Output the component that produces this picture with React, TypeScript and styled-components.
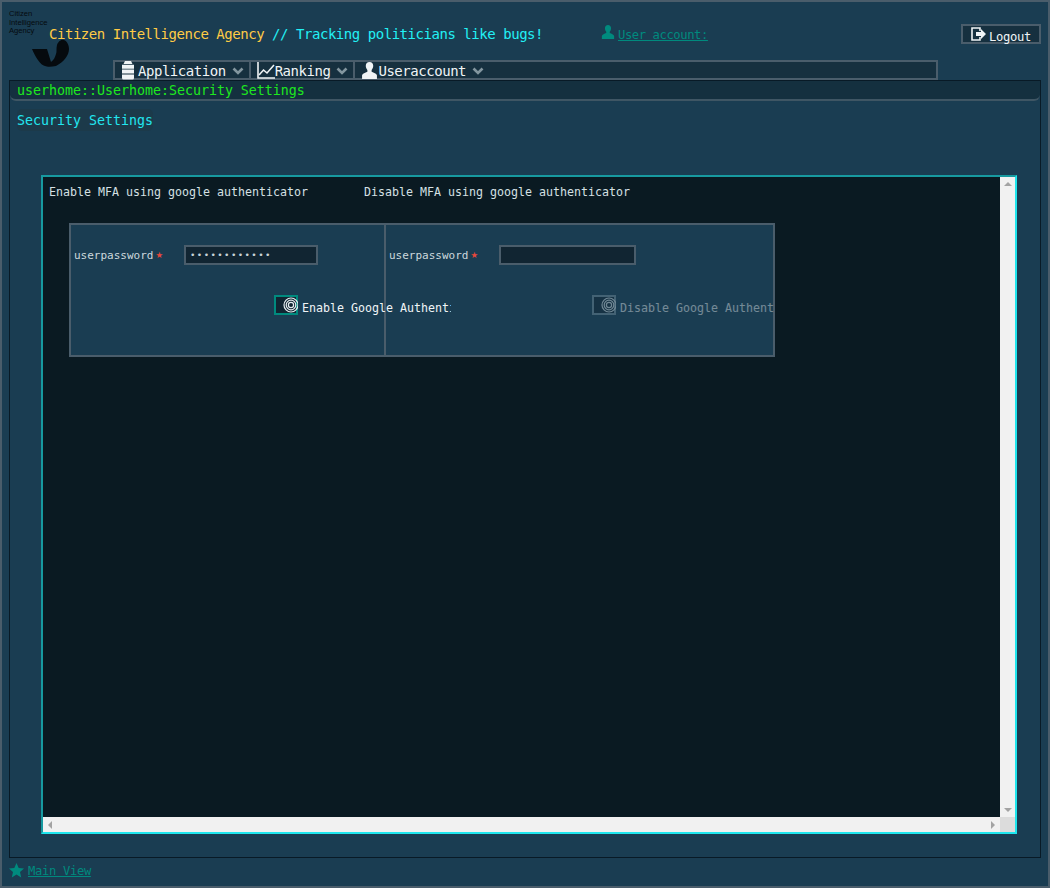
import * as React from 'react';
import styled, { createGlobalStyle } from 'styled-components';

const mono = '"DejaVu Sans Mono", "Liberation Mono", monospace';

const GlobalStyle = createGlobalStyle`
    html, body {
        margin: 0;
        padding: 0;
        background: #1a3d52;
    }
`;

const Page = styled.div`
    box-sizing: border-box;
    width: 1050px;
    height: 888px;
    display: flex;
    flex-direction: column;
    padding: 0 7px 0 7px;
    border: 2px solid #4a5d6b;
    background: #1a3d52;
    font-family: ${mono};
    overflow: hidden;
`;

const Header = styled.div`
    position: relative;
    display: flex;
    height: 58px;
    flex: none;
`;

const LogoBox = styled.div`
    position: absolute;
    left: 0;
    top: 8px;
    width: 60px;
    height: 62px;
`;

const LogoText = styled.div`
    font-family: "Liberation Sans", sans-serif;
    font-size: 7.6px;
    line-height: 8.5px;
    color: #050a0e;
`;

const LogoMark = styled.svg`
    position: absolute;
    left: 23px;
    top: 28px;
`;

const Title = styled.div`
    position: absolute;
    left: 40px;
    top: 23px;
    font-size: 14px;
    letter-spacing: -0.46px;
    line-height: 18px;
    color: #22f0f5;
    white-space: nowrap;
`;

const TitleBrand = styled.span`
    color: #ffcb45;
`;

const AccountLink = styled.a`
    position: absolute;
    left: 592px;
    top: 23px;
    display: flex;
    align-items: flex-start;
    gap: 3px;
    color: #008a7e;
    font-size: 12.2px;
    letter-spacing: -0.42px;
    line-height: 18px;
    white-space: nowrap;
    span {
        text-decoration: underline;
        margin-top: 1px;
    }
`;

const LogoutButton = styled.button`
    position: absolute;
    left: 952px;
    top: 22px;
    box-sizing: border-box;
    width: 80px;
    height: 20px;
    display: flex;
    align-items: center;
    padding: 0 0 0 8px;
    gap: 2px;
    border: 2px solid #4a5d6b;
    background: #16303f;
    color: #f0f4f6;
    font-family: ${mono};
    font-size: 12.2px;
    letter-spacing: -0.34px;
    span {
        margin-top: 5px;
    }
`;

const MenuBar = styled.div`
    box-sizing: border-box;
    margin-left: 104px;
    width: 825px;
    height: 20px;
    flex: none;
    display: flex;
    border: 2px solid #4a5d6b;
    background: #16303f;
`;

const MenuItem = styled.div`
    display: flex;
    align-items: center;
    height: 16px;
    padding: 0 5px 0 ${p => p.$pad}px;
    border-right: 2px solid #4a5d6b;
    color: #f0f4f6;
    font-size: 14px;
    letter-spacing: -0.46px;
    white-space: nowrap;
    &:last-child {
        border-right: none;
    }
    span {
        margin: 2px 0 0 ${p => p.$gap}px;
    }
    svg {
        flex: none;
    }
`;

const Caret = styled.svg`
    margin: 1px 0 0 6px;
`;

const Panel = styled.div`
    box-sizing: border-box;
    height: 778px;
    flex: none;
    display: flex;
    flex-direction: column;
    border: 1px solid #081a26;
`;

const PanelTitle = styled.div`
    box-sizing: border-box;
    height: 20px;
    flex: none;
    padding-left: 7px;
    background: #14303f;
    border-bottom: 2px solid #3f5664;
    border-radius: 0 0 6px 6px;
    color: #1ee81e;
    font-size: 13.3px;
    letter-spacing: -0.01px;
    line-height: 20px;
`;

const Heading = styled.div`
    align-self: flex-start;
    margin: 8px 0 0 7px;
    background: #1c3a4a;
    border-radius: 5px;
    color: #22e6f0;
    font-size: 13.3px;
    line-height: 23px;
    height: 22px;
`;

const Frame = styled.div`
    box-sizing: border-box;
    margin: 44px 0 0 31px;
    width: 976px;
    height: 659px;
    flex: none;
    display: grid;
    grid-template-columns: 1fr 15px;
    grid-template-rows: 1fr 15px;
    border: 2px solid;
    border-color: #179aa0 #1ee6ee #1ee6ee #179aa0;
    background: #0a1a22;
`;

const FrameContent = styled.div`
    padding: 0 0 0 6px;
    min-width: 0;
`;

const Tabs = styled.div`
    display: flex;
    height: 46px;
    padding-top: 8px;
    box-sizing: border-box;
    color: #d5e0e4;
    font-size: 11.63px;
    line-height: 15px;
`;

const Tab = styled.div`
    width: 315px;
    white-space: nowrap;
`;

const FormTable = styled.div`
    box-sizing: border-box;
    display: flex;
    margin-left: 20px;
    width: 706px;
    height: 134px;
    border: 2px solid #4a5d6b;
    background: #1a3d52;
`;

const FormCell = styled.div`
    box-sizing: border-box;
    width: ${p => p.$width}px;
    flex: none;
    padding: 20px 0 0 3px;
    min-width: 0;
    border-left: ${p => (p.$divider ? '2px solid #4a5d6b' : 'none')};
`;

const FieldRow = styled.div`
    display: flex;
    align-items: center;
    height: 20px;
`;

const FieldLabel = styled.label`
    width: 110px;
    flex: none;
    display: flex;
    align-items: center;
    color: #ccd8dd;
    font-size: 11px;
    white-space: nowrap;
    em {
        color: #e8483c;
        font-family: "DejaVu Sans", sans-serif;
        font-style: normal;
        font-size: 8.5px;
        line-height: 10px;
        margin-left: 2px;
    }
`;

const PasswordInput = styled.input`
    box-sizing: border-box;
    width: ${p => p.$width}px;
    height: 20px;
    padding: 0 4px;
    border: 2px solid #4a5d6b;
    background: #112532;
    color: #c8d3d8;
    font-family: ${mono};
    font-size: 9px;
    letter-spacing: 1.400px;
    outline: none;
`;

const ActionRow = styled.div`
    display: flex;
    align-items: center;
    height: 20px;
    margin: 30px 0 0 ${p => p.$left}px;
    opacity: ${p => (p.$disabled ? 0.42 : 1)};
`;

const IconButton = styled.div`
    box-sizing: border-box;
    position: relative;
    width: 24px;
    height: 20px;
    flex: none;
    border: 2px solid ${p => (p.$disabled ? '#7d95a3' : '#008a7e')};
    background: #112532;
    svg {
        position: absolute;
        right: -2px;
        top: 0;
    }
`;

const ActionLabel = styled.div`
    position: relative;
    z-index: 1;
    flex: none;
    width: ${p => p.$width}px;
    margin: 7px 0 0 4px;
    overflow: hidden;
    color: #f0f4f6;
    font-size: 11.63px;
    line-height: 15px;
    white-space: nowrap;
`;

const ScrollTrack = styled.div`
    display: flex;
    flex-direction: ${p => (p.$vertical ? 'column' : 'row')};
    justify-content: space-between;
    align-items: center;
    padding: ${p => (p.$vertical ? '5px 0' : '0 5px')};
    background: #f1f1f1;
`;

const Arrow = styled.div`
    width: 0;
    height: 0;
    border-style: solid;
    ${p => p.$dir === 'up' && 'border-width: 0 4px 4px; border-color: transparent transparent #a3a3a3;'}
    ${p => p.$dir === 'down' && 'border-width: 4px 4px 0; border-color: #a3a3a3 transparent transparent;'}
    ${p => p.$dir === 'left' && 'border-width: 4px 4px 4px 0; border-color: transparent #a3a3a3 transparent transparent;'}
    ${p => p.$dir === 'right' && 'border-width: 4px 0 4px 4px; border-color: transparent transparent transparent #a3a3a3;'}
`;

const ScrollCorner = styled.div`
    background: #dcdcdc;
`;

const Footer = styled.a`
    display: flex;
    align-items: center;
    gap: 4px;
    margin-top: 2px;
    height: 20px;
    color: #008a7e;
    font-size: 12.2px;
    letter-spacing: -0.35px;
    span {
        text-decoration: underline;
        margin-top: 1px;
    }
`;

const UserIcon = ({ size, color }: { size: number; color: string }) => (
    <svg width={size} height={size} viewBox="0 0 16 16" fill={color}>
        <path d="M8 0c-2.200 0-3.500 1.500-3.500 3.600 0 1.500.6 3 1.500 4v1.600c-2 .8-4.500 1.600-5 3.300V16h14v-3.500c-.5-1.700-3-2.500-5-3.300V7.600c.9-1 1.500-2.500 1.500-4C11.500 1.500 10.200 0 8 0z" />
    </svg>
);

const DatabaseIcon = () => (
    <svg width={16} height={19} viewBox="0 0 16 19" fill="#f0f4f6">
        <path d="M5 0h6l1.500 3h-9zM2 3.800h12v4H2zM2 8.600h12v4H2zM2 13.400h12V17q0 1.500-1.500 1.500h-9Q2 18.500 2 17z" />
    </svg>
);

const ChartIcon = () => (
    <svg width={18} height={17} viewBox="0 0 18 17" fill="none" stroke="#f0f4f6">
        <path d="M1 0v16h17" strokeWidth="1.600" />
        <path d="M2 13l4.500-5 3.500 3 7-8" strokeWidth="1.600" />
    </svg>
);

const LogoutIcon = () => (
    <svg width={16} height={14} viewBox="0 0 16 14">
        <path d="M9 4V1H1v12h8v-3" fill="none" stroke="#f0f4f6" strokeWidth="1.600" />
        <path d="M5 5h5V2l5 5-5 5V9H5z" fill="#f0f4f6" />
    </svg>
);

const StarIcon = () => (
    <svg width={15} height={15} viewBox="0 0 15 15" fill="#008a7e">
        <path d="M7.500 0l2.200 5 5.300.5-4 3.500 1.200 5.500-4.700-2.900-4.700 2.900 1.200-5.500-4-3.500 5.300-.5z" />
    </svg>
);

const FingerprintIcon = ({ color }: { color: string }) => (
    <svg width={15} height={16} viewBox="0 0 15 16" fill="none" stroke={color} strokeWidth="1.200">
        <circle cx="8" cy="8" r="7" />
        <circle cx="8" cy="8" r="4.800" />
        <circle cx="8" cy="8" r="2.600" />
    </svg>
);

const CaretIcon = () => (
    <Caret width={12} height={8} viewBox="0 0 12 8" fill="none" stroke="#83969f" strokeWidth="2.600">
        <path d="M1.500 1.500L6 6l4.500-4.500" />
    </Caret>
);

export default function App() {
    return (
        <Page>
            <GlobalStyle />
            <Header>
                <LogoBox>
                    <LogoText>Citizen<br />Intelligence<br />Agency</LogoText>
                    <LogoMark width={38} height={32} viewBox="0 0 38 32" fill="#050a0e">
                        <path d="M0 11h15l4 13c3-2 4-5 5-8 1-2 0-5 1-9 1-3 4-6 7-5 3 1 5 5 5 9 0 6-5 13-13 17-5 1-9 1-11 0C8 27 3 18 0 11z" />
                    </LogoMark>
                </LogoBox>
                <Title>
                    <TitleBrand>Citizen Intelligence Agency</TitleBrand> // Tracking politicians like bugs!
                </Title>
                <AccountLink>
                    <UserIcon size={14} color="#008a7e" />
                    <span>User account:</span>
                </AccountLink>
                <LogoutButton>
                    <LogoutIcon />
                    <span>Logout</span>
                </LogoutButton>
            </Header>
            <MenuBar>
                <MenuItem $pad={5} $gap={2}>
                    <DatabaseIcon />
                    <span>Application</span>
                    <CaretIcon />
                </MenuItem>
                <MenuItem $pad={6} $gap={0}>
                    <ChartIcon />
                    <span>Ranking</span>
                    <CaretIcon />
                </MenuItem>
                <MenuItem $pad={6} $gap={0}>
                    <UserIcon size={17} color="#f0f4f6" />
                    <span>Useraccount</span>
                    <CaretIcon />
                </MenuItem>
            </MenuBar>
            <Panel>
                <PanelTitle>userhome::Userhome:Security Settings</PanelTitle>
                <Heading>Security Settings</Heading>
                <Frame>
                    <FrameContent>
                        <Tabs>
                            <Tab>Enable MFA using google authenticator</Tab>
                            <Tab>Disable MFA using google authenticator</Tab>
                        </Tabs>
                        <FormTable>
                            <FormCell $width={313}>
                                <FieldRow>
                                    <FieldLabel>userpassword<em>★</em></FieldLabel>
                                    <PasswordInput type="password" $width={134} defaultValue="aaaaaaaaaaaa" />
                                </FieldRow>
                                <ActionRow $left={200}>
                                    <IconButton>
                                        <FingerprintIcon color="#e6edf0" />
                                    </IconButton>
                                    <ActionLabel $width={149}>Enable Google Authenticator</ActionLabel>
                                </ActionRow>
                            </FormCell>
                            <FormCell $width={389} $divider>
                                <FieldRow>
                                    <FieldLabel>userpassword<em>★</em></FieldLabel>
                                    <PasswordInput type="password" $width={137} />
                                </FieldRow>
                                <ActionRow $left={203} $disabled>
                                    <IconButton $disabled>
                                        <FingerprintIcon color="#e6edf0" />
                                    </IconButton>
                                    <ActionLabel $width={154}>Disable Google Authenticator</ActionLabel>
                                </ActionRow>
                            </FormCell>
                        </FormTable>
                    </FrameContent>
                    <ScrollTrack $vertical>
                        <Arrow $dir="up" />
                        <Arrow $dir="down" />
                    </ScrollTrack>
                    <ScrollTrack>
                        <Arrow $dir="left" />
                        <Arrow $dir="right" />
                    </ScrollTrack>
                    <ScrollCorner />
                </Frame>
            </Panel>
            <Footer>
                <StarIcon />
                <span>Main View</span>
            </Footer>
        </Page>
    );
}
